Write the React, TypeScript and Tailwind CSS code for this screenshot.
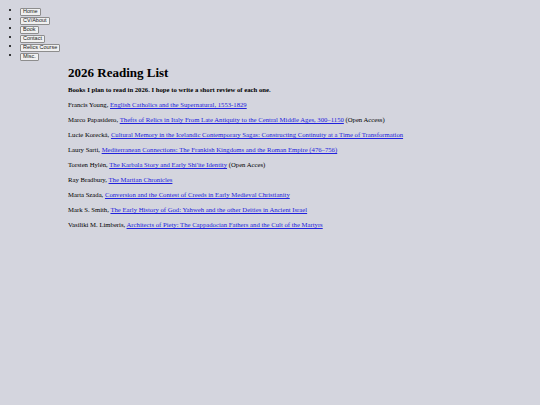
const navItems = ["Home", "CV/About", "Book", "Contact", "Relics Course", "Misc."];

type Entry = { author: string; title: string; note?: string };

const books: Entry[] = [
  { author: "Francis Young", title: "English Catholics and the Supernatural, 1553-1829" },
  {
    author: "Marco Papasidero",
    title: "Thefts of Relics in Italy From Late Antiquity to the Central Middle Ages, 300–1150",
    note: "(Open Access)",
  },
  {
    author: "Lucie Korecká",
    title: "Cultural Memory in the Icelandic Contemporary Sagas: Constructing Continuity at a Time of Transformation",
  },
  { author: "Laury Sarti", title: "Mediterranean Connections: The Frankish Kingdoms and the Roman Empire (476–756)" },
  { author: "Torsten Hylén", title: "The Karbala Story and Early Shi'ite Identity", note: "(Open Acces)" },
  { author: "Ray Bradbury", title: "The Martian Chronicles" },
  { author: "Marta Szada", title: "Conversion and the Contest of Creeds in Early Medieval Christianity" },
  { author: "Mark S. Smith", title: "The Early History of God: Yahweh and the other Deities in Ancient Israel" },
  { author: "Vasiliki M. Limberis", title: "Architects of Piety: The Cappadocian Fathers and the Cult of the Martyrs" },
];

export default function App() {
  return (
    <div className="min-h-[405px] bg-[#d4d5de] text-black" style={{ fontFamily: '"Liberation Serif", serif' }}>
      <ul className="list-disc pl-[20px] pt-[7px] text-[5.5px] leading-none marker:text-[7px]">
        {navItems.map((n) => (
          <li key={n} className="h-[9px]">
            <button
              className="h-[8px] rounded-[1px] border border-[#8d8d8d] bg-[#f0f0f0] px-[2px] align-top text-[5.5px] leading-none text-[#222]"
              style={{ fontFamily: '"Liberation Sans", sans-serif' }}
            >
              {n}
            </button>
          </li>
        ))}
      </ul>

      <main className="ml-[68px] mt-[4px]">
        <h1 className="text-[13px] font-bold leading-[16px]">2026 Reading List</h1>
        <p className="mt-[5px] text-[6.7px] font-bold leading-[8px]">
          Books I plan to read in 2026. I hope to write a short review of each one.
        </p>
        <div className="mt-[7px] flex flex-col gap-[7px] text-[6.7px] leading-[8px]">
          {books.map((b) => (
            <p key={b.author}>
              {b.author},{" "}
              <a href="#" className="text-[#2222dd] underline decoration-[0.5px] underline-offset-[1px]">
                {b.title}
              </a>
              {b.note ? ` ${b.note}` : null}
            </p>
          ))}
        </div>
      </main>
    </div>
  );
}
